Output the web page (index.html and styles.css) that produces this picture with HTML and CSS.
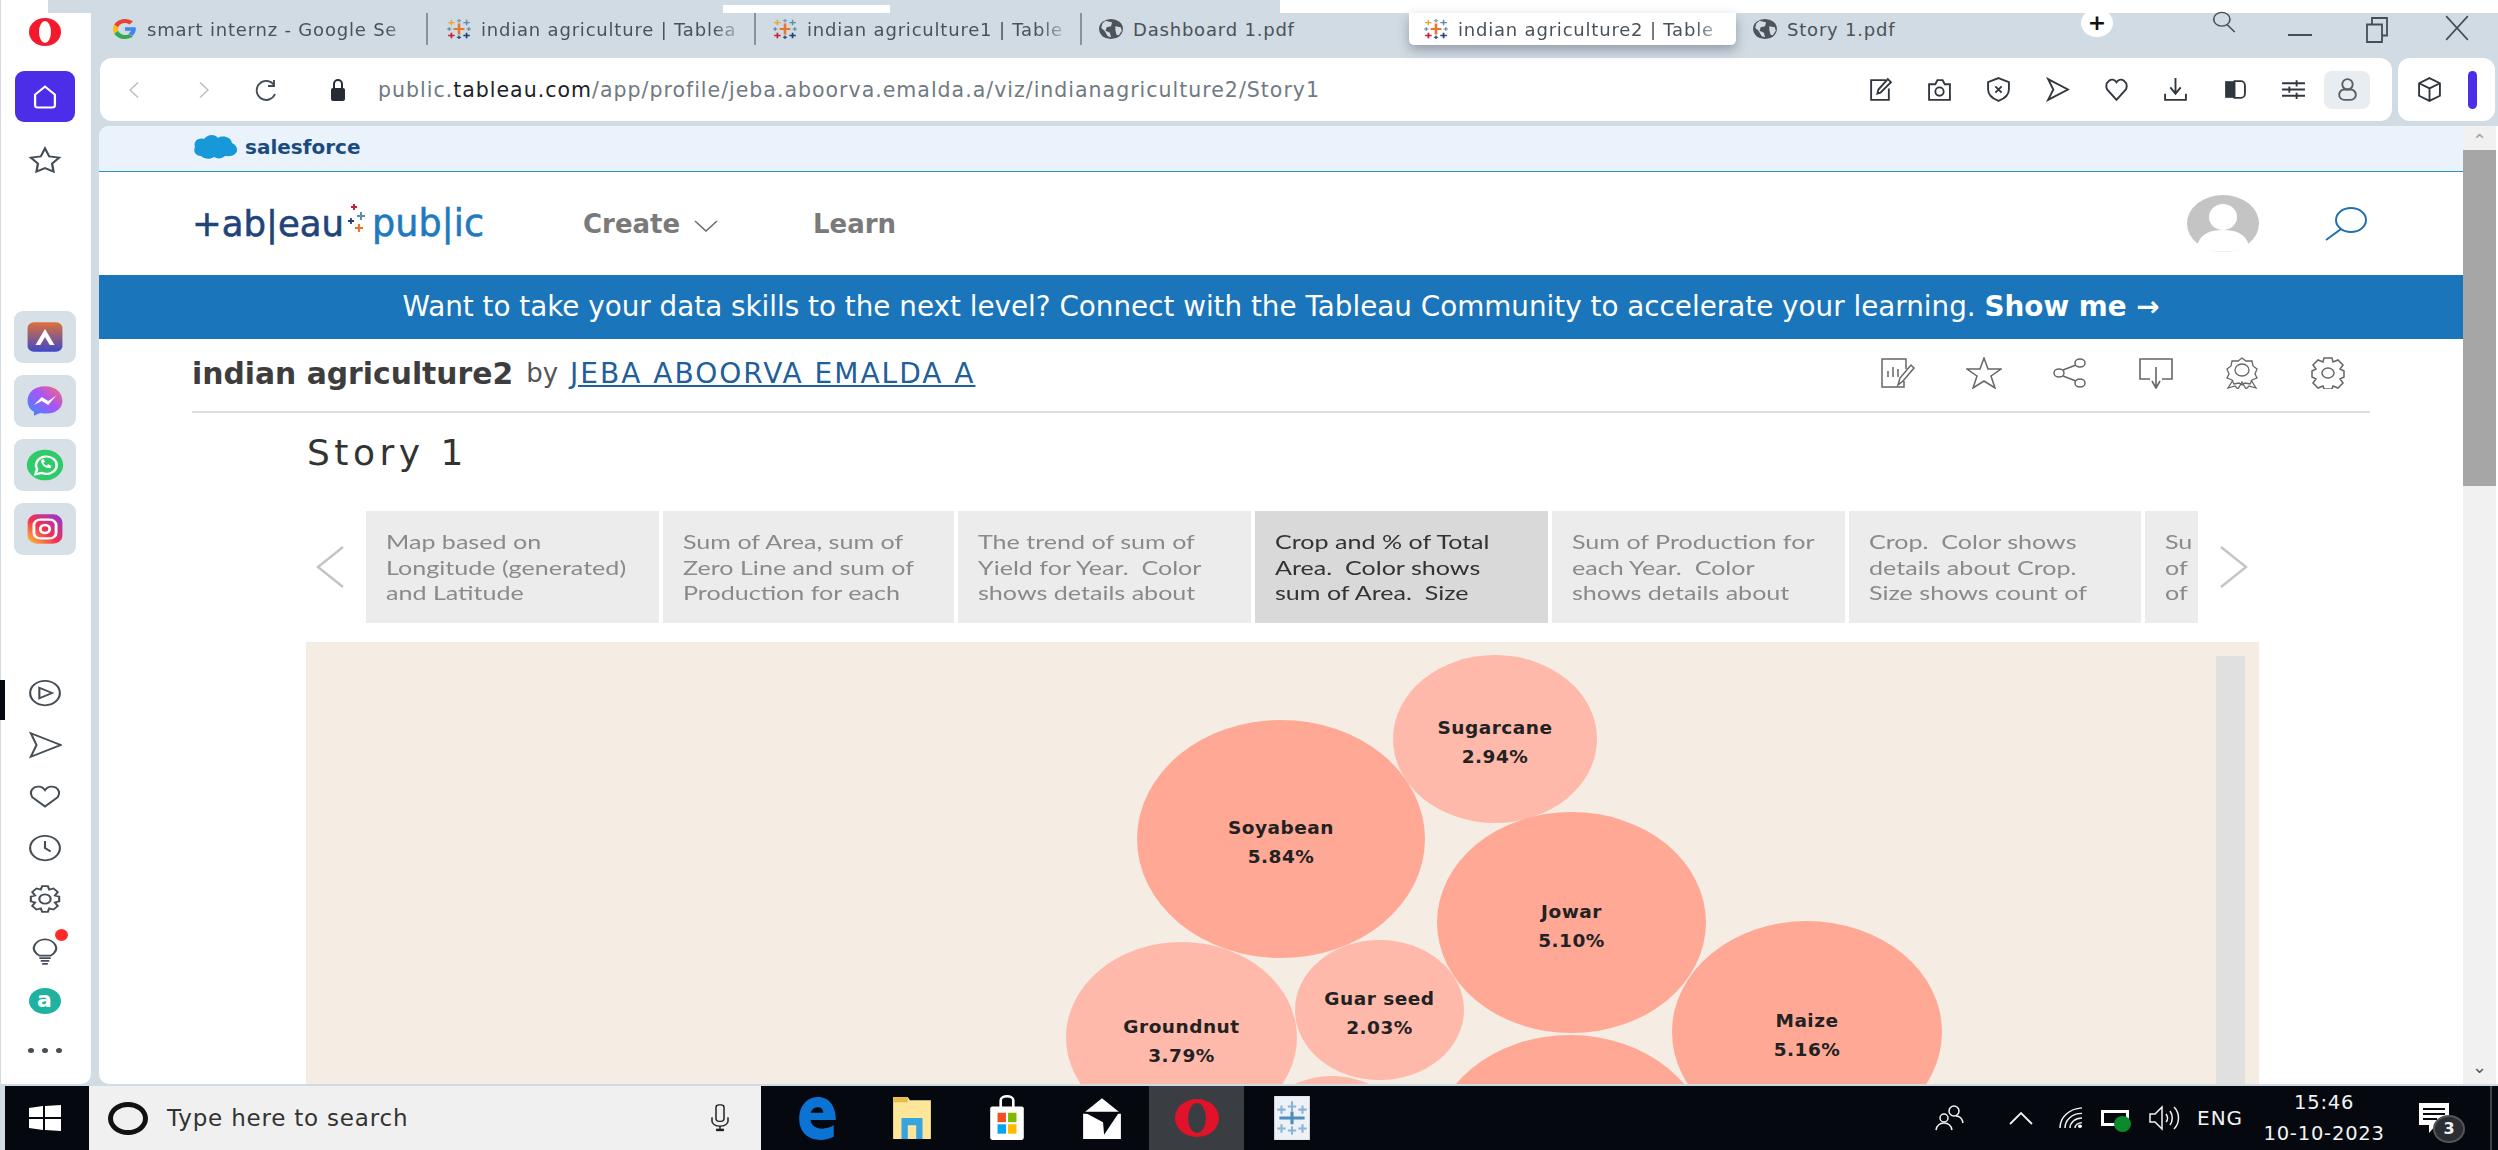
FILE: index.html
```html
<!DOCTYPE html>
<html lang="en">
<head>
    <meta charset="UTF-8">
    <meta name="viewport" content="width=device-width, initial-scale=1.0">
    <title>indian agriculture2 | Tableau Public</title>
    <link rel="stylesheet" href="styles.css">
</head>
<body>

    <svg class="defs" width="0" height="0">
        <symbol id="tableauMark" viewBox="0 0 24 24" preserveAspectRatio="none">
            <path d="M12 6v12M7 12h10" stroke="#e8762c" stroke-width="2.4"/>
            <path d="M5 2v6M2 5h6" stroke="#e8a33c" stroke-width="1.4"/>
            <path d="M19 2v6M16 5h6" stroke="#5b8fa8" stroke-width="1.4"/>
            <path d="M12 1v4M10 3h4" stroke="#7099a6" stroke-width="1.2"/>
            <path d="M5 16v6M2 19h6" stroke="#c72037" stroke-width="1.6"/>
            <path d="M19 16v6M16 19h6" stroke="#1f447a" stroke-width="1.6"/>
            <path d="M12 19v4M10 21h4" stroke="#1f447a" stroke-width="1.2"/>
            <path d="M3 10v4M1 12h4" stroke="#59879b" stroke-width="1.2"/>
            <path d="M21 10v4M19 12h4" stroke="#59879b" stroke-width="1.2"/>
        </symbol>
        <symbol id="globe" viewBox="0 0 24 24" preserveAspectRatio="none">
            <circle cx="12" cy="12" r="11" fill="#4d5359"/>
            <path d="M7 3l6 2-1 4-4 1-1 4 4 2 1 5-3-1-3-6-3-3 1-5zM16 9l5 1 1 4-3 5-2-1-1-5z" fill="#d1dbe3"/>
        </symbol>
    </svg>

    <div class="strip-white strip-a"></div>
    <div class="strip-white strip-b"></div>

    <div class="window">
        <!-- opera sidebar -->
        <aside class="sidebar">
            <div class="opera-logo"></div>
            <div class="home-btn">
                <svg class="side-icon" viewBox="0 0 24 24" preserveAspectRatio="none"><path d="M5 10l7-7 7 7v9a2 2 0 0 1-2 2H7a2 2 0 0 1-2-2z" fill="none" stroke="#fff" stroke-width="1.6"/></svg>
            </div>
            <svg class="side-icon star-icon" viewBox="0 0 24 24" preserveAspectRatio="none"><path d="M12 2l3 7 7 1-5 5 1 7-6-3-6 3 1-7-5-5 7-1z" fill="none" stroke="#454e57" stroke-width="1.6"/></svg>

            <div class="app-list">
                <div class="app-box">
                    <svg class="app-icon" viewBox="0 0 24 24" preserveAspectRatio="none"><defs><linearGradient id="gradAria" x1="0" y1="0" x2="0" y2="1"><stop offset="0" stop-color="#e0703a"/><stop offset="1" stop-color="#3d49c8"/></linearGradient></defs><rect x="1" y="1" width="22" height="22" rx="4" fill="url(#gradAria)"/><path d="M12 6l-6 12h3l3-6 3 6h3z" fill="#fff"/></svg>
                </div>
                <div class="app-box">
                    <svg class="app-icon" viewBox="0 0 24 24" preserveAspectRatio="none"><defs><linearGradient id="gradMsg" x1="0" y1="1" x2="1" y2="0"><stop offset="0" stop-color="#3a8cff"/><stop offset=".55" stop-color="#a855f7"/><stop offset="1" stop-color="#ff6a68"/></linearGradient></defs><path d="M12 1C5 1 1 6 1 12c0 4 2 7 4 8v3l4-2c10 2 14-4 14-9 0-6-4-11-11-11z" fill="url(#gradMsg)"/><path d="M5 15l5-6 4 3 5-4-5 7-4-3z" fill="#fff"/></svg>
                </div>
                <div class="app-box">
                    <svg class="app-icon" viewBox="0 0 24 24" preserveAspectRatio="none"><circle cx="12" cy="12" r="11.5" fill="#2fcb6b"/><path d="M6 19l1-4a6.500 6.500 0 1 1 3 3z" fill="none" stroke="#fff" stroke-width="1.6"/><path d="M9.500 8.500c0 3.500 2.500 6 6 6l.5-2-2-1-1 1c-1 -.5-1.500-1-2-2l1-1-1-2z" fill="#fff"/></svg>
                </div>
                <div class="app-box">
                    <svg class="app-icon" viewBox="0 0 24 24" preserveAspectRatio="none"><defs><linearGradient id="gradInsta" x1="0" y1="1" x2="1" y2="0"><stop offset="0" stop-color="#ffc93c"/><stop offset=".45" stop-color="#f5304f"/><stop offset="1" stop-color="#8f36d8"/></linearGradient></defs><rect x="1" y="1" width="22" height="22" rx="6" fill="url(#gradInsta)"/><rect x="5" y="5" width="14" height="14" rx="4" fill="none" stroke="#fff" stroke-width="1.8"/><circle cx="12" cy="12" r="3" fill="none" stroke="#fff" stroke-width="1.8"/></svg>
                </div>
            </div>

            <div class="side-tools">
                <span class="active-mark"></span>
                <svg class="side-icon" viewBox="0 0 24 24" preserveAspectRatio="none"><circle cx="12" cy="12" r="10.500" fill="none" stroke="#454e57" stroke-width="1.500"/><path d="M8 7.500l9 4.500-9 4.500z" fill="none" stroke="#454e57" stroke-width="1.500"/></svg>
                <svg class="side-icon" viewBox="0 0 24 24" preserveAspectRatio="none"><path d="M2 2l21 10L2 22l4-10z" fill="none" stroke="#454e57" stroke-width="1.500"/></svg>
                <svg class="side-icon" viewBox="0 0 24 24" preserveAspectRatio="none"><path d="M12 21L3 13C-1 6 8 0 12 7c4-7 13-1 9 6z" fill="none" stroke="#454e57" stroke-width="1.500"/></svg>
                <svg class="side-icon" viewBox="0 0 24 24" preserveAspectRatio="none"><circle cx="12" cy="12" r="10.500" fill="none" stroke="#454e57" stroke-width="1.500"/><path d="M12 6v6l4 3" fill="none" stroke="#454e57" stroke-width="1.500"/></svg>
                <svg class="side-icon" viewBox="0 0 24 24" preserveAspectRatio="none"><circle cx="12" cy="12" r="4" fill="none" stroke="#454e57" stroke-width="1.500"/><path d="M10 1h4l1 3 3-1 3 3-2 3 3 1v4l-3 1 2 3-3 3-3-1-1 3h-4l-1-3-3 1-3-3 2-3-3-1v-4l3-1-2-3 3-3 3 1z" fill="none" stroke="#454e57" stroke-width="1.500"/></svg>
                <div class="bulb-wrap">
                    <svg class="side-icon" viewBox="0 0 24 24" preserveAspectRatio="none"><path d="M8 16c-8-6-2-14 4-14s12 8 4 14zM8 18h8M9 20.500h6M10 23h4" fill="none" stroke="#454e57" stroke-width="1.500"/></svg>
                    <span class="red-dot"></span>
                </div>
                <div class="aria-badge">a</div>
                <div class="more-dots"><i></i><i></i><i></i></div>
            </div>
        </aside>

        <main class="browser">
            <!-- tab strip -->
            <div class="tabstrip">
                <div class="tab tab-google">
                    <svg class="tab-icon" viewBox="0 0 24 24" preserveAspectRatio="none"><path d="M22 12c0-.8-.1-1.500-.2-2H12v4h5.600c-.5 1.300-1.300 2.300-2.400 3l3.500 2.700c2.100-1.900 3.300-4.700 3.300-7.700z" fill="#4285f4"/><path d="M12 23c3 0 5.500-1 7.300-2.700L15.800 17.600c-1 .7-2.300 1-3.800 1-2.900 0-5.400-2-6.300-4.600l-3.600 2.800C3.900 20.500 7.700 23 12 23z" fill="#34a853"/><path d="M5.700 14c-.4-1.300-.4-2.700 0-4L2.100 7.200c-1.500 3-1.500 6.600 0 9.600z" fill="#fbbc05"/><path d="M12 5.400c1.600 0 3.100.6 4.200 1.700l3.200-3.200C17.400 2 14.800 1 12 1 7.700 1 3.900 3.500 2.100 7.200L5.700 10C6.600 7.400 9.100 5.400 12 5.400z" fill="#ea4335"/></svg>
                    <span class="tab-label">smart internz - Google Se</span>
                </div>
                <div class="tab tab-ag">
                    <svg class="tab-icon"><use href="#tableauMark"/></svg>
                    <span class="tab-label">indian agriculture | Tablea</span>
                </div>
                <div class="tab tab-ag1">
                    <svg class="tab-icon"><use href="#tableauMark"/></svg>
                    <span class="tab-label">indian agriculture1 | Table</span>
                </div>
                <div class="tab tab-dash">
                    <svg class="tab-icon"><use href="#globe"/></svg>
                    <span class="tab-label">Dashboard 1.pdf</span>
                </div>
                <div class="tab tab-active">
                    <svg class="tab-icon"><use href="#tableauMark"/></svg>
                    <span class="tab-label">indian agriculture2 | Table</span>
                </div>
                <div class="tab tab-story">
                    <svg class="tab-icon"><use href="#globe"/></svg>
                    <span class="tab-label">Story 1.pdf</span>
                </div>
                <div class="new-tab">+</div>
                <svg class="win-search" viewBox="0 0 24 24" preserveAspectRatio="none"><circle cx="10" cy="9" r="7.500" fill="none" stroke="#454e57" stroke-width="1.500"/><path d="M15 15l7 8" stroke="#454e57" stroke-width="1.500"/></svg>
                <div class="win-min"></div>
                <svg class="win-restore" viewBox="0 0 24 24" preserveAspectRatio="none"><path d="M2 7h15v16H2zM7 7V1h15v16h-5" fill="none" stroke="#454e57" stroke-width="1.800"/></svg>
                <svg class="win-close" viewBox="0 0 24 24" preserveAspectRatio="none"><path d="M2 1l20 22M22 1L2 23" stroke="#454e57" stroke-width="1.500"/></svg>
            </div>

            <!-- address bar -->
            <div class="addr-row">
                <div class="addr-bar">
                    <svg class="nav-arrow arrow-back" viewBox="0 0 12 24" preserveAspectRatio="none"><path d="M10 3L2 12l8 9" fill="none" stroke="#b9bfc5" stroke-width="1.500"/></svg>
                    <svg class="nav-arrow arrow-fwd" viewBox="0 0 12 24" preserveAspectRatio="none"><path d="M2 3l8 9-8 9" fill="none" stroke="#b9bfc5" stroke-width="1.500"/></svg>
                    <svg class="reload" viewBox="0 0 24 24" preserveAspectRatio="none"><path d="M20 7a9.500 9.500 0 1 0 1 9M20 2v6h-6" fill="none" stroke="#454e57" stroke-width="1.900"/></svg>
                    <svg class="lock" viewBox="0 0 16 24" preserveAspectRatio="none"><path d="M4 11V6a4 4 0 0 1 8 0v5" fill="none" stroke="#252c33" stroke-width="2"/><rect x="1" y="10" width="14" height="13" rx="2" fill="#252c33"/></svg>
                    <div class="url">public.<b>tableau.com</b>/app/profile/jeba.aboorva.emalda.a/viz/indianagriculture2/Story1</div>
                    <div class="addr-tools">
                        <svg class="addr-icon" viewBox="0 0 24 24" preserveAspectRatio="none"><path d="M17 3H3v19h17V11M9 16l1-4 9-10 3 3-10 10z" fill="none" stroke="#30373e" stroke-width="1.800"/></svg>
                        <svg class="addr-icon" viewBox="0 0 24 24" preserveAspectRatio="none"><path d="M2 7h6l2-4h5l2 4h5v15H2z" fill="none" stroke="#30373e" stroke-width="1.800"/><circle cx="12" cy="14" r="4" fill="none" stroke="#30373e" stroke-width="1.800"/></svg>
                        <svg class="addr-icon" viewBox="0 0 24 24" preserveAspectRatio="none"><path d="M12 1l10 4v7c0 6-5 9-10 11C7 21 2 18 2 12V5z" fill="none" stroke="#30373e" stroke-width="1.800"/><path d="M9 9l6 6M15 9l-6 6" stroke="#30373e" stroke-width="1.800"/></svg>
                        <svg class="addr-icon" viewBox="0 0 24 24" preserveAspectRatio="none"><path d="M3 2l19 10L3 22l5-10z" fill="none" stroke="#30373e" stroke-width="1.800"/></svg>
                        <svg class="addr-icon" viewBox="0 0 24 24" preserveAspectRatio="none"><path d="M12 22L3 12C0 5 8-1 12 5c4-6 12 0 9 7z" fill="none" stroke="#30373e" stroke-width="1.800"/></svg>
                        <svg class="addr-icon" viewBox="0 0 24 24" preserveAspectRatio="none"><path d="M12 1v14M7 10l5 6 5-6M2 16v6h20v-6" fill="none" stroke="#30373e" stroke-width="1.800"/></svg>
                        <svg class="addr-icon" viewBox="0 0 24 24" preserveAspectRatio="none"><path d="M3 4h9v16H3z" fill="#30373e"/><path d="M12 4h6a4 4 0 0 1 4 4v8a4 4 0 0 1-4 4h-6z" fill="none" stroke="#30373e" stroke-width="1.800"/></svg>
                        <svg class="addr-icon" viewBox="0 0 24 24" preserveAspectRatio="none"><path d="M1 6h22M1 12h22M1 18h22M15 3v6M8 9v6M15 15v6" stroke="#30373e" stroke-width="1.800"/></svg>
                        <div class="profile-btn">
                            <svg class="addr-icon" viewBox="0 0 24 24" preserveAspectRatio="none"><circle cx="12" cy="7" r="5" fill="none" stroke="#565e66" stroke-width="1.800"/><rect x="4" y="12" width="16" height="10" rx="5" fill="none" stroke="#565e66" stroke-width="1.800"/></svg>
                        </div>
                    </div>
                </div>
                <div class="ext-box">
                    <svg class="addr-icon" viewBox="0 0 24 24" preserveAspectRatio="none"><path d="M12 1l10 5v12l-10 5-10-5V6zM2 6l10 5 10-5M12 11v12" fill="none" stroke="#30373e" stroke-width="1.800"/></svg>
                    <span class="ext-bar"></span>
                </div>
            </div>

            <!-- tableau page -->
            <div class="page">
                <div class="page-body">
                    <div class="sf-band">
                        <svg class="sf-cloud" viewBox="0 0 45 26" preserveAspectRatio="none"><path d="M8 22C2 22 0 17 2 13 0 8 5 3 11 5c4-5 11-5 14-1 5-3 13-1 14 5 5 2 7 8 3 11-3 3-8 2-10 2-3 3-8 3-11 1-4 3-10 2-13-1z" fill="#1798d8"/></svg>
                        <span class="sf-name">salesforce</span>
                    </div>

                    <header class="site-head">
                        <div class="logo">
                            <span class="logo-tab">+ab|eau</span>
                            <svg class="logo-mark" viewBox="0 0 24 40" preserveAspectRatio="none"><path d="M8 0v6M5 3h6" stroke="#c72037" stroke-width="2"/><path d="M15 8v8M11 12h8" stroke="#5b8fa8" stroke-width="2"/><path d="M5 14v6M2 17h6" stroke="#1f447a" stroke-width="1.800"/><path d="M13 20v8M9 24h8" stroke="#e8762c" stroke-width="2.200"/></svg>
                            <span class="logo-pub">pub|ic</span>
                        </div>
                        <nav class="site-nav">
                            <a class="nav-create">Create
                                <svg class="nav-chev" viewBox="0 0 24 12" preserveAspectRatio="none"><path d="M1 1l11 10L23 1" fill="none" stroke="#6e6e6e" stroke-width="1.600"/></svg>
                            </a>
                            <a class="nav-learn">Learn</a>
                        </nav>
                        <div class="avatar">
                            <svg viewBox="0 0 72 57" class="avatar-img" preserveAspectRatio="none"><ellipse cx="36" cy="28.500" rx="36" ry="28.500" fill="#c4c4c4"/><ellipse cx="36" cy="22" rx="14" ry="13" fill="#fff"/><path d="M10 50c4-12 14-15 26-15s22 3 26 15c-14 9-38 9-52 0z" fill="#fff"/></svg>
                        </div>
                        <svg class="site-search" viewBox="0 0 44 36" preserveAspectRatio="none"><ellipse cx="27" cy="14" rx="15" ry="12" fill="none" stroke="#1f6fb5" stroke-width="2"/><path d="M17 23L2 34" stroke="#1f6fb5" stroke-width="2"/></svg>
                    </header>

                    <div class="banner">Want to take your data skills to the next level? Connect with the Tableau Community to accelerate your learning. <b>Show me →</b></div>

                    <div class="viz-title">
                        <h1>indian agriculture2</h1>
                        <span class="viz-by">by</span>
                        <a class="viz-author">JEBA ABOORVA EMALDA A</a>
                        <div class="viz-tools">
                            <svg class="viz-icon" viewBox="0 0 36 32" preserveAspectRatio="none"><path d="M24 24v6H2V2h24v10M8 20v-6M13 20V10M18 20v-8M18 28l2-7 11-13 3 3-11 13z" fill="none" stroke="#666" stroke-width="1.500"/></svg>
                            <svg class="viz-icon" viewBox="0 0 36 32" preserveAspectRatio="none"><path d="M18 1l4 11h13l-10 7 4 12-11-7-11 7 4-12L1 12h13z" fill="none" stroke="#666" stroke-width="1.500"/></svg>
                            <svg class="viz-icon" viewBox="0 0 36 32" preserveAspectRatio="none"><ellipse cx="7" cy="16" rx="5" ry="4" fill="none" stroke="#666" stroke-width="1.500"/><ellipse cx="28" cy="6" rx="5" ry="4" fill="none" stroke="#666" stroke-width="1.500"/><ellipse cx="28" cy="26" rx="5" ry="4" fill="none" stroke="#666" stroke-width="1.500"/><path d="M11 13L24 8M11 19l13 5" stroke="#666" stroke-width="1.500"/></svg>
                            <svg class="viz-icon" viewBox="0 0 36 32" preserveAspectRatio="none"><path d="M12 22H2V2h32v20H24M18 10v20M14 24l4 7 4-7" fill="none" stroke="#666" stroke-width="1.600"/></svg>
                            <svg class="viz-icon" viewBox="0 0 36 32" preserveAspectRatio="none"><path d="M18 1l4 3h6l1 5 4 3-2 5 2 4-5 2-2 4-5-1-3 2-3-2-5 1-2-4-5-2 2-4-2-5 4-3 1-5h6zM9 23L4 31l7-2 3 3 4-7 4 7 3-3 7 2-5-8" fill="none" stroke="#666" stroke-width="1.300"/><ellipse cx="18" cy="13" rx="7" ry="6" fill="none" stroke="#666" stroke-width="1.300"/></svg>
                            <svg class="viz-icon" viewBox="0 0 36 32" preserveAspectRatio="none"><ellipse cx="18" cy="16" rx="6" ry="5" fill="none" stroke="#666" stroke-width="1.500"/><path d="M14 1h8l1 4 5-2 5 5-3 4 4 2v6l-4 2 3 4-5 5-5-2-1 3h-8l-1-3-5 2-5-5 3-4-4-2v-6l4-2-3-4 5-5 5 2z" fill="none" stroke="#666" stroke-width="1.500"/></svg>
                        </div>
                    </div>

                    <section class="story">
                        <h2 class="story-title">Story 1</h2>
                        <div class="story-nav">
                            <svg class="story-chev" viewBox="0 0 28 42" preserveAspectRatio="none"><path d="M27 1L2 21l25 20" fill="none" stroke="#c4c4c4" stroke-width="2.400"/></svg>
                            <div class="story-points">
                                <div class="point point-1"><p>Map based on<br>Longitude (generated)<br>and Latitude</p></div>
                                <div class="point point-2"><p>Sum of Area, sum of<br>Zero Line and sum of<br>Production for each</p></div>
                                <div class="point point-3"><p>The trend of sum of<br>Yield for Year.&nbsp; Color<br>shows details about</p></div>
                                <div class="point point-4 is-current"><p>Crop and % of Total<br>Area.&nbsp; Color shows<br>sum of Area.&nbsp; Size</p></div>
                                <div class="point point-5"><p>Sum of Production for<br>each Year.&nbsp; Color<br>shows details about</p></div>
                                <div class="point point-6"><p>Crop.&nbsp; Color shows<br>details about Crop.<br>Size shows count of</p></div>
                                <div class="point point-7"><p>Su<br>of<br>of</p></div>
                            </div>
                            <svg class="story-chev" viewBox="0 0 28 42" preserveAspectRatio="none"><path d="M1 1l25 20L1 41" fill="none" stroke="#c4c4c4" stroke-width="2.400"/></svg>
                        </div>
                        <div class="viz">
                            <div class="bubble dark b-soyabean"><span>Soyabean</span><span>5.84%</span></div>
                            <div class="bubble light b-sugarcane"><span>Sugarcane</span><span>2.94%</span></div>
                            <div class="bubble dark b-rice"></div>
                            <div class="bubble dark b-jowar"><span>Jowar</span><span>5.10%</span></div>
                            <div class="bubble dark b-maize"><span>Maize</span><span>5.16%</span></div>
                            <div class="bubble light b-small"></div>
                            <div class="bubble light b-groundnut"><span>Groundnut</span><span>3.79%</span></div>
                            <div class="bubble light b-guar"><span>Guar seed</span><span>2.03%</span></div>
                            <div class="viz-scroll"></div>
                        </div>
                    </section>
                </div>
                <div class="scrollbar">
                    <div class="scroll-btn">⌃</div>
                    <div class="scroll-thumb"></div>
                    <div class="scroll-track"></div>
                    <div class="scroll-btn scroll-down">⌄</div>
                </div>
            </div>
        </main>
    </div>

    <!-- windows taskbar -->
    <footer class="taskbar">
        <div class="start">
            <svg class="start-logo" viewBox="0 0 32 26" preserveAspectRatio="none"><path d="M0 3l14-2v11H0zM16 1l16-1v12H16zM0 14h14v11L0 23zM16 14h16v12l-16-1z" fill="#fff"/></svg>
        </div>
        <div class="search-box">
            <span class="cortana"></span>
            <span class="search-text">Type here to search</span>
            <svg class="mic" viewBox="0 0 22 34" preserveAspectRatio="none"><rect x="7" y="1" width="8" height="20" rx="3" fill="none" stroke="#222" stroke-width="1.500"/><path d="M3 16v5a8 6 0 0 0 16 0v-5M11 27v5" fill="none" stroke="#222" stroke-width="1.500"/><rect x="7" y="30" width="8" height="3" fill="#222"/></svg>
        </div>
        <div class="task-apps">
            <div class="task-app">
                <svg class="task-icon" viewBox="0 0 40 44"><path d="M3 23C3 10 11 2 21 2c11 0 17 9 17 22H14c0 8 12 11 22 5v11c-14 7-33 2-33-17zm11-6h12c0-7-10-7-12 0z" fill="#0a73d4"/></svg>
            </div>
            <div class="task-app">
                <svg class="task-icon" viewBox="0 0 40 44" preserveAspectRatio="none"><path d="M2 2h14l2 3h20v37H2z" fill="#fde59a"/><path d="M2 2h14v5H2z" fill="#e9bd4d"/><path d="M10 22h20v20h-6V29h-8v13h-6z" fill="#37a4dd"/></svg>
            </div>
            <div class="task-app">
                <svg class="task-icon" viewBox="0 0 40 44" preserveAspectRatio="none"><path d="M14 12V5c0-5 12-5 12 0v7" fill="none" stroke="#fff" stroke-width="2.500"/><rect x="4" y="11" width="32" height="32" rx="2" fill="#fff"/><rect x="11" y="17" width="8" height="9" fill="#f25022"/><rect x="21" y="17" width="8" height="9" fill="#7fba00"/><rect x="11" y="28" width="8" height="9" fill="#00a4ef"/><rect x="21" y="28" width="8" height="9" fill="#ffb900"/></svg>
            </div>
            <div class="task-app">
                <svg class="task-icon" viewBox="0 0 40 44" preserveAspectRatio="none"><path d="M20 3L36 16H4z" fill="#fff"/><path d="M2 18h36v24H2z" fill="#fff"/><path d="M4 17h32L22 38l-1-12z" fill="#05090f"/></svg>
            </div>
            <div class="task-app is-open">
                <div class="opera-task"></div>
            </div>
            <div class="task-app">
                <svg class="task-icon" viewBox="0 0 40 44" preserveAspectRatio="none"><rect x="3" y="1" width="34" height="42" fill="#eef2f6"/><g stroke="#8ab4d4" stroke-width="2"><path d="M20 6v10M16 11h8M10 10v8M6 14h8M30 10v8M26 14h8M10 28v8M6 32h8M30 28v8M26 32h8M20 30v8M16 34h8"/></g><path d="M20 16v12M8 22h24" stroke="#4c8dbe" stroke-width="3"/></svg>
            </div>
        </div>
        <div class="tray">
            <svg class="tray-icon tray-people" viewBox="0 0 30 26" preserveAspectRatio="none"><circle cx="20" cy="6" r="5" fill="none" stroke="#f2f2f2" stroke-width="1.500"/><circle cx="10" cy="13" r="4" fill="none" stroke="#f2f2f2" stroke-width="1.500"/><path d="M2 25c1-5 4-7 8-7s7 2 8 7M22 11c3 0 6 2 7 7" fill="none" stroke="#f2f2f2" stroke-width="1.500"/></svg>
            <svg class="tray-icon tray-chev" viewBox="0 0 24 14" preserveAspectRatio="none"><path d="M1 13L12 2l11 11" fill="none" stroke="#f2f2f2" stroke-width="1.800"/></svg>
            <svg class="tray-icon tray-wifi" viewBox="0 0 24 24" preserveAspectRatio="none"><path d="M1 23C1 11 10 2 23 1M6 23c0-9 7-16 17-16M11 23c0-6 5-11 12-11M16 23c0-3 3-6 7-6" fill="none" stroke="#f2f2f2" stroke-width="1.500"/><circle cx="21" cy="21" r="2" fill="#fff"/></svg>
            <div class="tray-battery"><span class="batt-plug"></span></div>
            <svg class="tray-icon tray-sound" viewBox="0 0 32 26" preserveAspectRatio="none"><path d="M1 9h5l7-7v22l-7-7H1z" fill="none" stroke="#f2f2f2" stroke-width="1.500"/><path d="M17 9c2 3 2 6 0 8M21 6c3 4 3 10 0 14M25 2c6 6 6 16 0 22" fill="none" stroke="#f2f2f2" stroke-width="1.500"/></svg>
            <span class="tray-lang">ENG</span>
            <div class="tray-clock"><span>15:46</span><span>10-10-2023</span></div>
            <div class="tray-notify">
                <svg class="notify-icon" viewBox="0 0 30 30" preserveAspectRatio="none"><path d="M0 0h30v22H17l-7 8v-8H0z" fill="#fff"/><path d="M4 6h22M4 11h22M4 16h14" stroke="#05090f" stroke-width="2"/></svg>
                <span class="notify-count">3</span>
            </div>
            <span class="tray-end"></span>
        </div>
    </footer>

</body>
</html>
```

FILE: styles.css
```css
* {
    box-sizing: border-box;
}

html, body {
    margin: 0;
    height: 100%;
    overflow: hidden;
}

body {
    position: relative;
    width: 2498px;
    height: 1150px;
    background-color: #d1dbe3;
    font-family: "DejaVu Sans", sans-serif;
    color: #333;
}

.defs {
    position: absolute;
}

.strip-white {
    position: absolute;
    background-color: #fff;
}

.strip-a {
    left: 1280px;
    top: 0;
    width: 1218px;
    height: 13px;
}

.strip-b {
    left: 723px;
    top: 5px;
    width: 167px;
    height: 8px;
}

.window {
    display: flex;
    height: 1086px;
}

/* sidebar */
.sidebar {
    flex: 0 0 91px;
    height: 1084px;
    background-color: #fff;
    border-left: 1px solid #d1dbe3;
    border-radius: 0 0 10px 0;
    margin-right: 8px;
    padding-right: 3px;
    display: flex;
    flex-direction: column;
    align-items: center;
    position: relative;
}

/* notch above the sidebar, next to the opera button */
.sidebar::after {
    content: "";
    position: absolute;
    left: 47px;
    top: 0;
    width: 43px;
    height: 13px;
    background-color: #d1dbe3;
}

.opera-logo {
    width: 32px;
    height: 28px;
    margin-top: 18px;
    border-style: solid;
    border-color: #f5192d;
    border-width: 3px 10px;
    border-radius: 50%;
}

.home-btn {
    width: 60px;
    height: 51px;
    margin-top: 25px;
    background-color: #4d2ee8;
    border-radius: 9px;
    display: flex;
    align-items: center;
    justify-content: center;
}

.side-icon {
    width: 34px;
    height: 28px;
    display: block;
}

.star-icon {
    margin-top: 24px;
}

.app-list {
    margin-top: 137px;
    display: flex;
    flex-direction: column;
    gap: 12px;
}

.app-box {
    width: 62px;
    height: 52px;
    background-color: #d7e0e6;
    border-radius: 9px;
    display: flex;
    align-items: center;
    justify-content: center;
}

.app-icon {
    width: 38px;
    height: 32px;
}

.side-tools {
    margin-top: 124px;
    display: flex;
    flex-direction: column;
    align-items: center;
    gap: 23.500px;
}

.active-mark {
    position: absolute;
    left: -1px;
    top: 680px;
    width: 5px;
    height: 40px;
    background-color: #05090f;
}

.bulb-wrap {
    position: relative;
}

.red-dot {
    position: absolute;
    right: -6px;
    top: -8px;
    width: 13px;
    height: 12px;
    border-radius: 50%;
    background-color: #ff2b2b;
}

.aria-badge {
    width: 32px;
    height: 26px;
    margin-top: 0;
    border-radius: 50%;
    background-color: #20b2a0;
    color: #fff;
    font-size: 22px;
    font-weight: bold;
    line-height: 24px;
    text-align: center;
}

.more-dots {
    display: flex;
    gap: 8px;
    margin-top: 10px;
}

.more-dots i {
    width: 6px;
    height: 5px;
    border-radius: 50%;
    background-color: #454e57;
}

/* browser chrome */
.browser {
    flex: 1;
    min-width: 0;
    display: flex;
    flex-direction: column;
}

.tabstrip {
    height: 58px;
    display: flex;
    align-items: flex-start;
    padding: 13px 0 0 13px;
    position: relative;
}

.tab {
    height: 32px;
    display: flex;
    align-items: center;
    gap: 9px;
    font-size: 18px;
    letter-spacing: 0.8px;
    color: #4a5259;
    border-right: 2px solid #8a9299;
    padding-right: 8px;
}

.tab-icon {
    flex: 0 0 26px;
    width: 26px;
    height: 22px;
}

.tab-label {
    white-space: nowrap;
    overflow: hidden;
    flex: 1;
    -webkit-mask-image: linear-gradient(to right, #000 88%, transparent);
    mask-image: linear-gradient(to right, #000 88%, transparent);
}

.tab-google {
    width: 316px;
    margin-right: 18px;
}

.tab-ag {
    width: 310px;
    margin-right: 16px;
}

.tab-ag1 {
    width: 310px;
    margin-right: 16px;
}

.tab-dash {
    width: 296px;
    border-right: none;
    margin-right: 15px;
}

.tab-active {
    width: 327px;
    height: 32px;
    margin-right: 16px;
    padding: 0 8px 0 14px;
    background-color: #fff;
    border: none;
    border-radius: 0 0 5px 5px;
    box-shadow: 0 5px 12px rgba(70, 85, 100, 0.45);
}

.tab-story {
    width: 220px;
    border-right: none;
}

.tab-story .tab-label,
.tab-dash .tab-label {
    -webkit-mask-image: none;
    mask-image: none;
}

.new-tab {
    position: absolute;
    left: 1982px;
    top: 9px;
    width: 32px;
    height: 28px;
    border-radius: 50%;
    background-color: #fff;
    color: #111;
    font-size: 22px;
    font-weight: bold;
    line-height: 27px;
    text-align: center;
}

.win-search {
    position: absolute;
    left: 2112px;
    top: 11px;
    width: 26px;
    height: 22px;
}

.win-min {
    position: absolute;
    left: 2189px;
    top: 34px;
    width: 24px;
    height: 2px;
    background-color: #454e57;
}

.win-restore {
    position: absolute;
    left: 2266px;
    top: 17px;
    width: 24px;
    height: 26px;
}

.win-close {
    position: absolute;
    left: 2345px;
    top: 15px;
    width: 26px;
    height: 26px;
}

.addr-row {
    height: 63px;
    display: flex;
    gap: 6px;
    padding-left: 1px;
    padding-right: 3px;
}

.addr-bar {
    flex: 1;
    background-color: #fff;
    border-radius: 12px;
    display: flex;
    align-items: center;
    padding-left: 28px;
}

.nav-arrow {
    width: 12px;
    height: 20px;
}

.arrow-fwd {
    margin-left: 58px;
}

.reload {
    width: 24px;
    height: 24px;
    margin-left: 44px;
}

.lock {
    width: 16px;
    height: 24px;
    margin-left: 52px;
}

.url {
    margin-left: 32px;
    font-size: 20.500px;
    letter-spacing: 1px;
    color: #6f7a83;
    white-space: nowrap;
}

.url b {
    font-weight: normal;
    color: #1b2126;
}

.addr-tools {
    margin-left: auto;
    padding-right: 22px;
    display: flex;
    align-items: center;
    gap: 34px;
}

.addr-icon {
    width: 25px;
    height: 25px;
    display: block;
}

.profile-btn {
    width: 46px;
    height: 38px;
    margin-left: -16px;
    background-color: #e8edf1;
    border-radius: 8px;
    display: flex;
    align-items: center;
    justify-content: center;
}

.ext-box {
    flex: 0 0 97px;
    background-color: #fff;
    border-radius: 12px;
    display: flex;
    align-items: center;
    padding-left: 19px;
    gap: 26px;
}

.ext-bar {
    width: 9px;
    height: 38px;
    background-color: #4d2ee8;
    border-radius: 5px;
}

/* page */
.page {
    margin-top: 5px;
    height: 958px;
    display: flex;
    background-color: #fff;
    border-radius: 10px 0 0 10px;
    overflow: hidden;
}

.page-body {
    width: 2364px;
    height: 958px;
    overflow: hidden;
}

.sf-band {
    height: 46px;
    background-color: #eaf2fb;
    border-bottom: 1px solid #2f8fc9;
    display: flex;
    align-items: center;
    padding: 0 0 3px 94px;
    gap: 7px;
}

.sf-cloud {
    width: 45px;
    height: 26px;
}

.sf-name {
    font-size: 20px;
    font-weight: bold;
    color: #1b4b7e;
}

.site-head {
    height: 103px;
    display: flex;
    align-items: center;
    padding-left: 93px;
}

.logo {
    display: flex;
    align-items: center;
    width: 391px;
}

.logo-tab {
    font-size: 35.500px;
    color: #1f447a;
    -webkit-text-stroke: 0.6px #1f447a;
}

.logo-mark {
    width: 24px;
    height: 40px;
    margin: 0 2px;
}

.logo-pub {
    font-size: 36.500px;
    color: #1f7ac0;
    -webkit-text-stroke: 0.6px #1f7ac0;
}

.site-nav {
    display: flex;
    align-items: center;
    font-size: 26px;
    font-weight: bold;
    color: #7a7a7a;
}

.nav-create {
    width: 230px;
    display: flex;
    align-items: center;
    gap: 14px;
}

.nav-chev {
    width: 24px;
    height: 12px;
    margin-top: 5px;
}

.avatar {
    margin-left: auto;
    margin-right: 65px;
    width: 72px;
    height: 57px;
}

.avatar-img {
    width: 72px;
    height: 57px;
    display: block;
}

.site-search {
    width: 44px;
    height: 36px;
    margin-right: 95px;
}

.banner {
    height: 64px;
    background-color: #1b75bb;
    color: #fff;
    font-size: 27.800px;
    line-height: 64px;
    text-align: center;
    white-space: nowrap;
}

.banner b {
    font-weight: bold;
}

.viz-title {
    height: 74px;
    margin: 0 93px;
    border-bottom: 2px solid #ddd;
    display: flex;
    align-items: center;
    padding-bottom: 4px;
}

.viz-title h1 {
    margin: 0;
    font-size: 29.800px;
    font-weight: bold;
    color: #3d3d3d;
}

.viz-by {
    margin-left: 13px;
    font-size: 26px;
    color: #555;
}

.viz-author {
    margin-left: 12px;
    font-size: 28px;
    letter-spacing: 2px;
    color: #1f5f9b;
    text-decoration: underline;
    white-space: nowrap;
}

.viz-tools {
    margin-left: auto;
    padding-right: 24px;
    display: flex;
    gap: 50px;
}

.viz-icon {
    width: 36px;
    height: 32px;
    display: block;
}

.story {
    padding-left: 207px;
}

.story-title {
    margin: 0;
    height: 98px;
    line-height: 80px;
    font-size: 36px;
    font-weight: normal;
    color: #333;
    padding-left: 1px;
    letter-spacing: 4.500px;
}

.story-nav {
    height: 112px;
    display: flex;
    align-items: center;
    margin-left: 10px;
}

.story-chev {
    flex: 0 0 28px;
    width: 28px;
    height: 42px;
}

.story-points {
    width: 1832px;
    margin: 0 22px 0 22px;
    height: 112px;
    display: flex;
    gap: 4px;
    overflow: hidden;
}

.point {
    flex: 0 0 auto;
    height: 112px;
    padding: 18px 0 0 20px;
    background-color: #ececec;
    color: #8a8a8a;
    overflow: hidden;
}

/* the capture is stretched sideways, so the text is widened to suit */
.point p {
    margin: 0;
    font-family: Lato, sans-serif;
    font-size: 19px;
    line-height: 25.500px;
    white-space: nowrap;
    transform: scaleX(1.32);
    transform-origin: left top;
}

.point-1 {
    width: 293px;
}

.point-2 {
    width: 291px;
}

.point-3 {
    width: 293px;
}

.point-4 {
    width: 293px;
}

.point-5 {
    width: 293px;
}

.point-6 {
    width: 292px;
}

.point-7 {
    width: 60px;
}

.is-current {
    background-color: #d9d9d9;
    color: #333;
}

.viz {
    position: relative;
    margin-top: 19px;
    width: 1953px;
    height: 442px;
    background-color: #f5ede3;
    overflow: hidden;
}

.viz-scroll {
    position: absolute;
    left: 1910px;
    top: 14px;
    width: 29px;
    bottom: 0;
    background-color: #e0e0e0;
}

/* bubbles sit on the viz canvas */
.bubble {
    position: absolute;
    border-radius: 50%;
    display: flex;
    flex-direction: column;
    align-items: center;
    justify-content: center;
    font-size: 18.500px;
    font-weight: 600;
    line-height: 29px;
    color: #222;
    letter-spacing: 0.5px;
    padding-top: 6px;
}

.dark {
    background-color: #ffa896;
}

.light {
    background-color: #ffb9ab;
}

.b-soyabean {
    left: 831px;
    top: 78px;
    width: 288px;
    height: 238px;
}

.b-sugarcane {
    left: 1087px;
    top: 13px;
    width: 204px;
    height: 168px;
}

.b-jowar {
    left: 1131px;
    top: 170px;
    width: 269px;
    height: 221px;
}

.b-maize {
    left: 1366px;
    top: 279px;
    width: 270px;
    height: 222px;
}

.b-rice {
    left: 1125px;
    top: 393px;
    width: 278px;
    height: 228px;
}

.b-groundnut {
    left: 760px;
    top: 300px;
    width: 231px;
    height: 191px;
}

.b-guar {
    left: 989px;
    top: 298px;
    width: 169px;
    height: 140px;
}

.b-small {
    left: 951px;
    top: 434px;
    width: 150px;
    height: 124px;
}

.scrollbar {
    width: 33px;
    height: 958px;
    background-color: #f1f1f1;
    display: flex;
    flex-direction: column;
}

.scroll-btn {
    height: 24px;
    text-align: center;
    color: #a6a6a6;
    font-size: 18px;
    line-height: 30px;
}

.scroll-down {
    line-height: 14px;
    color: #555;
}

.scroll-thumb {
    height: 336px;
    background-color: #a6a6a6;
}

.scroll-track {
    flex: 1;
}

/* taskbar */
.taskbar {
    position: absolute;
    left: 5px;
    right: 0;
    top: 1086px;
    height: 64px;
    background-color: #05090f;
    display: flex;
    align-items: stretch;
}

.start {
    flex: 0 0 84px;
    display: flex;
    align-items: center;
    justify-content: center;
    padding-right: 4px;
}

.start-logo {
    width: 32px;
    height: 26px;
}

.search-box {
    flex: 0 0 672px;
    background-color: #f0f0f0;
    display: flex;
    align-items: center;
    padding-left: 19px;
}

.cortana {
    width: 40px;
    height: 33px;
    border: 5px solid #111;
    border-radius: 50%;
}

.search-text {
    margin-left: 19px;
    font-size: 23px;
    letter-spacing: 0.8px;
    color: #333;
}

.mic {
    width: 22px;
    height: 28px;
    margin-left: auto;
    margin-right: 30px;
}

.task-apps {
    display: flex;
    padding-left: 8px;
}

.task-app {
    width: 95px;
    display: flex;
    align-items: center;
    justify-content: center;
}

.task-icon {
    width: 42px;
    height: 46px;
}

.is-open {
    background-color: #3a3d42;
}

.opera-task {
    width: 44px;
    height: 38px;
    border-style: solid;
    border-color: #e3122b;
    border-width: 4px 13px;
    border-radius: 50%;
}

.tray {
    flex: 1;
    position: relative;
    display: flex;
    align-items: center;
    color: #f2f2f2;
    padding-left: 595px;
}

.tray-icon {
    display: block;
}

.tray-people {
    width: 30px;
    height: 26px;
}

.tray-chev {
    width: 24px;
    height: 14px;
    margin-left: 45px;
}

.tray-wifi {
    width: 24px;
    height: 22px;
    margin-left: 26px;
}

.tray-battery {
    position: relative;
    width: 28px;
    height: 16px;
    margin-left: 18px;
    background-color: #05090f;
    border: 3px solid #fff;
}

.batt-plug {
    position: absolute;
    left: 10px;
    top: 3px;
    width: 17px;
    height: 16px;
    border-radius: 50%;
    background-color: #0a8a2a;
}

.tray-sound {
    width: 32px;
    height: 26px;
    margin-left: 20px;
}

.tray-lang {
    margin-left: 16px;
    font-size: 20px;
    letter-spacing: 1px;
}

.tray-clock {
    width: 130px;
    margin-left: 16px;
    display: flex;
    flex-direction: column;
    align-items: center;
    font-size: 19.500px;
    letter-spacing: 0.8px;
    line-height: 31px;
    white-space: nowrap;
}

.tray-notify {
    position: relative;
    margin-left: 30px;
    width: 30px;
    height: 30px;
}

.notify-icon {
    width: 30px;
    height: 30px;
    display: block;
}

.notify-count {
    position: absolute;
    left: 14px;
    top: 12px;
    width: 32px;
    height: 28px;
    border-radius: 50%;
    background-color: #2b2f34;
    border: 2px solid #555;
    font-size: 16px;
    font-weight: bold;
    line-height: 24px;
    text-align: center;
}

.tray-end {
    position: absolute;
    right: 6px;
    top: 0;
    width: 2px;
    height: 64px;
    background-color: #444;
}
```
